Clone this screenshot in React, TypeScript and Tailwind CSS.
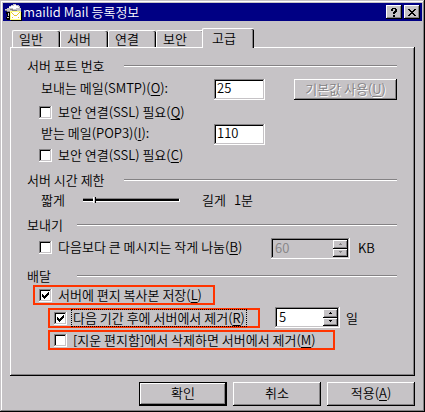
import { useState } from 'react';
import type { ReactNode } from 'react';

const RAISED = 'bg-[#c6c3c6] shadow-[inset_-1px_-1px_0_#000,inset_1px_1px_0_#fff,inset_-2px_-2px_0_#848284]';
const SUNKEN = 'shadow-[inset_-1px_-1px_0_#fff,inset_1px_1px_0_#848284,inset_-2px_-2px_0_#c6c3c6,inset_2px_2px_0_#000]';

const TABS = ['일반', '서버', '연결', '보안', '고급'];

function Key({ children }: { children: string }) {
  return (
    <>
      (<span className="underline underline-offset-2">{children}</span>)
    </>
  );
}

function Heading({ children, short }: { children: ReactNode; short?: boolean }) {
  return (
    <div className="flex h-5 items-center">
      <h2 className={short ? 'w-[50px]' : 'w-[97px]'}>{children}</h2>
      <div className="h-0.5 flex-1 border-t border-b border-t-[#848284] border-b-white" />
    </div>
  );
}

type CheckProps = { id: string; defaultChecked?: boolean; focused?: boolean; children: ReactNode };

function Check({ id, defaultChecked, focused, children }: CheckProps) {
  return (
    <div className="flex items-center gap-1">
      <span className="relative flex">
        <input
          id={id}
          type="checkbox"
          defaultChecked={defaultChecked}
          className={`peer size-[13px] appearance-none bg-white outline-none ${SUNKEN}`}
        />
        <svg
          viewBox="0 0 13 13"
          shapeRendering="crispEdges"
          className="pointer-events-none absolute inset-0 hidden size-[13px] peer-checked:block"
        >
          <path d="M3 5h1v3h-1zM4 6h1v3h-1zM5 7h1v3h-1zM6 6h1v3h-1zM7 5h1v3h-1zM8 4h1v3h-1zM9 3h1v3h-1z" />
        </svg>
      </span>
      <label
        htmlFor={id}
        className={`border border-dotted px-px leading-4 whitespace-nowrap ${focused ? 'border-black' : 'border-transparent'}`}
      >
        {children}
      </label>
    </div>
  );
}

type SpinnerProps = { label: string; initial: number; disabled?: boolean; className: string };

function Spinner({ label, initial, disabled, className }: SpinnerProps) {
  const [value, setValue] = useState(initial);
  const color = disabled ? 'text-[#848284]' : 'bg-white text-black';

  return (
    <div className={`flex h-[21px] p-0.5 ${SUNKEN} ${color} ${className}`}>
      <input
        aria-label={label}
        value={value}
        disabled={disabled}
        onChange={(e) => setValue(Number(e.target.value) || 0)}
        className="h-4 min-w-0 flex-1 pl-0.5 outline-none"
      />
      <div className="flex w-[15px] flex-col bg-[#c6c3c6]">
        <button
          aria-label={`${label} 늘리기`}
          disabled={disabled}
          onClick={() => setValue(value + 1)}
          className={`flex flex-1 items-center justify-center ${RAISED}`}
        >
          <svg width="5" height="3" shapeRendering="crispEdges" fill="currentColor">
            <path d="M2 0h1v1h-1zM1 1h3v1h-3z" />
          </svg>
        </button>
        <button
          aria-label={`${label} 줄이기`}
          disabled={disabled}
          onClick={() => setValue(Math.max(0, value - 1))}
          className={`flex flex-1 items-center justify-center ${RAISED}`}
        >
          <svg width="5" height="3" shapeRendering="crispEdges" fill="currentColor">
            <path d="M1 0h3v1h-3zM2 1h1v1h-1z" />
          </svg>
        </button>
      </div>
    </div>
  );
}

function MailIcon() {
  return (
    <svg width="17" height="17" viewBox="0 0 17 17" shapeRendering="crispEdges" aria-hidden="true">
      <path d="M0 5h2v-1h2v-2h2v-1h2v-1h3v1h3v1h1v2h1v3h-2v1h-12v-1h-2z" fill="#c6c3c6" />
      <path d="M4 3h2v-1h3v-1h2v1h2v1h1v1h-3v1h-3v-1h-4z" fill="#fff" />
      <path d="M0 6h2v1h3v1h-3v-1h-2zM5 5h3v1h4v1h-5v-1h-2z" fill="#848284" />
      <path d="M1 8h4v8h-3v-1h-1v-2h1v-3h-1z" fill="#000" />
      <path d="M3 9h1v3h-1zM2 13h2v1h-2z" fill="#c6c3c6" />
      <path d="M5 7h11v9h-11z" fill="#ffff84" />
      <path d="M6 8h9v7h-9z" fill="#fff" />
      <path d="M6 8h1v1h1v1h1v1h3v-1h1v-1h1v-1h1v1h-1v1h-1v1h-1v1h-3v-1h-1v-1h-1v-1h-1zM7 13h1v1h-1zM13 13h1v1h-1z" fill="#e7c731" />
      <path d="M16 8h1v9h-11v-1h10z" fill="#000" />
    </svg>
  );
}

export default function App() {
  const [tab, setTab] = useState('고급');

  return (
    <main
      className={`min-h-[412px] bg-[#c6c3c6] p-[3px] pb-1.5 font-['Noto_Sans_CJK_KR',sans-serif] text-[13px] leading-5 font-[350] text-black shadow-[inset_-1px_-1px_0_#000,inset_1px_1px_0_#c6c3c6,inset_-2px_-2px_0_#848284,inset_2px_2px_0_#fff]`}
    >
      {/* Title bar */}
      <header className="flex h-[18px] items-center bg-[#000084] pr-0.5 pl-0.5 text-white">
        <MailIcon />
        <h1 className="ml-px flex-1">mailid Mail 등록정보</h1>
        <button aria-label="도움말" className={`flex h-3.5 w-4 items-center justify-center ${RAISED}`}>
          <svg width="6" height="9" viewBox="0 0 6 9" shapeRendering="crispEdges">
            <path d="M1 0h4v1h1v3h-1v1h-1v1h-2v-2h1v-1h1v-2h-2v2h-2v-2h1zM2 7h2v2h-2z" />
          </svg>
        </button>
        <button aria-label="닫기" className={`ml-0.5 flex h-3.5 w-4 items-center justify-center ${RAISED}`}>
          <svg width="8" height="7" viewBox="0 0 8 7" shapeRendering="crispEdges">
            <path d="M0 0h2v1h1v1h2v-1h1v-1h2v1h-1v1h-1v1h-1v1h1v1h1v1h1v1h-2v-1h-1v-1h-2v1h-1v1h-2v-1h1v-1h1v-1h1v-1h-1v-1h-1v-1h-1z" />
          </svg>
        </button>
      </header>

      <div className="px-[7px] pt-[7px]">
        {/* Tabs */}
        <div role="tablist" className="flex h-[19px] items-end pl-0.5">
          {TABS.map((name) => (
            <button
              key={name}
              role="tab"
              aria-selected={tab === name}
              onClick={() => setTab(name)}
              className={`rounded-t-[2px] border-t border-l border-white bg-[#c6c3c6] text-left leading-4 shadow-[inset_-1px_0_0_#000,inset_-2px_0_0_#848284] ${
                tab === name
                  ? 'relative z-10 -mb-px -ml-0.5 h-5 w-[52px] pb-0.5 pl-[9px]'
                  : 'h-[17px] w-12 pb-0.5 pl-1.5'
              }`}
            >
              {name}
            </button>
          ))}
        </div>

        {/* Tab page */}
        <section className={`pt-[9px] pr-[18px] pb-[26px] pl-[17px] ${RAISED}`}>
          <Heading>서버 포트 번호</Heading>
          <div className="mt-[3px] flex h-[21px] pl-3.5">
            <label htmlFor="smtp" className="w-[173px] leading-[18px]">
              보내는 메일(SMTP)<Key>O</Key>:
            </label>
            <input id="smtp" defaultValue="25" className={`h-[21px] w-[51px] bg-white px-[3px] pb-1 outline-none ${SUNKEN}`} />
            <button
              disabled
              className={`ml-auto h-[21px] w-[103px] pb-0.5 leading-4 text-[#848284] [text-shadow:1px_1px_0_#fff] ${RAISED}`}
            >
              기본값 사용<Key>U</Key>
            </button>
          </div>
          <div className="mt-0.5 flex h-5 items-center pl-3">
            <Check id="smtp-ssl">
              보안 연결(SSL) 필요<Key>Q</Key>
            </Check>
          </div>
          <div className="mt-0.5 flex h-[21px] pl-3.5">
            <label htmlFor="pop3" className="w-[173px] leading-[18px]">
              받는 메일(POP3)<Key>I</Key>:
            </label>
            <input id="pop3" defaultValue="110" className={`h-[21px] w-[51px] bg-white px-[3px] pb-1 outline-none ${SUNKEN}`} />
          </div>
          <div className="flex h-5 items-center pl-3">
            <Check id="pop3-ssl">
              보안 연결(SSL) 필요<Key>C</Key>
            </Check>
          </div>

          <div className="mt-[5px]">
            <Heading>서버 시간 제한</Heading>
          </div>
          <div className="flex h-5 items-center pl-3.5">
            <label htmlFor="timeout" className="w-[42px]">짧게</label>
            <input
              id="timeout"
              type="range"
              min="0"
              max="9"
              defaultValue="1"
              className="h-1 w-[97px] appearance-none border-t border-r border-b border-t-[#848284] border-r-white border-b-white bg-black outline-none [&::-webkit-slider-thumb]:h-1.5 [&::-webkit-slider-thumb]:w-[3px] [&::-webkit-slider-thumb]:appearance-none [&::-webkit-slider-thumb]:border-r [&::-webkit-slider-thumb]:border-l [&::-webkit-slider-thumb]:border-l-white [&::-webkit-slider-thumb]:border-r-black [&::-webkit-slider-thumb]:bg-[#c6c3c6]"
            />
            <span className="ml-[22px]">길게</span>
            <output htmlFor="timeout" className="ml-2">1분</output>
          </div>

          <div className="mt-[5px]">
            <Heading short>보내기</Heading>
          </div>
          <div className="mt-[3px] flex h-[21px] items-start pl-3">
            <Check id="split">
              다음보다 큰 메시지는 작게 나눔<Key>B</Key>
            </Check>
            <Spinner label="메시지 크기" initial={60} disabled className="ml-auto w-[79px]" />
            <span className="w-[47px] pl-2">KB</span>
          </div>

          <div className="mt-[7px] -mb-px">
            <Heading short>배달</Heading>
          </div>
          <div className="ml-1.5 flex h-5 w-[182px] items-center border-2 border-[#ff3400] pl-1">
            <Check id="keep" defaultChecked>
              서버에 편지 복사본 저장<Key>L</Key>
            </Check>
          </div>
          <div className="mt-0.5 ml-[21px] flex h-[21px] items-end">
            <div className="flex h-5 w-[212px] items-center border-2 border-[#ff3400] pl-1">
              <Check id="expire" defaultChecked focused>
                다음 기간 후에 서버에서 제거<Key>R</Key>
              </Check>
            </div>
            <Spinner label="보관 기간" initial={5} className="ml-[15px] w-[65px]" />
            <span className="ml-1.5">일</span>
          </div>
          <div className="mt-0.5 ml-[21px] flex h-5 w-[287px] items-center border-2 border-[#ff3400] pl-1">
            <Check id="purge">
              [지운 편지함]에서 삭제하면 서버에서 제거<Key>M</Key>
            </Check>
          </div>
        </section>
      </div>

      {/* Dialog buttons */}
      <footer className="mt-1.5 flex justify-end gap-1.5 pr-[7px]">
        <button className={`h-6 w-[88px] border border-black pb-0.5 leading-4 ${RAISED}`}>확인</button>
        <button className={`h-6 w-[88px] pb-0.5 leading-4 ${RAISED}`}>취소</button>
        <button className={`h-6 w-[88px] pb-0.5 leading-4 ${RAISED}`}>
          적용<Key>A</Key>
        </button>
      </footer>
    </main>
  );
}
